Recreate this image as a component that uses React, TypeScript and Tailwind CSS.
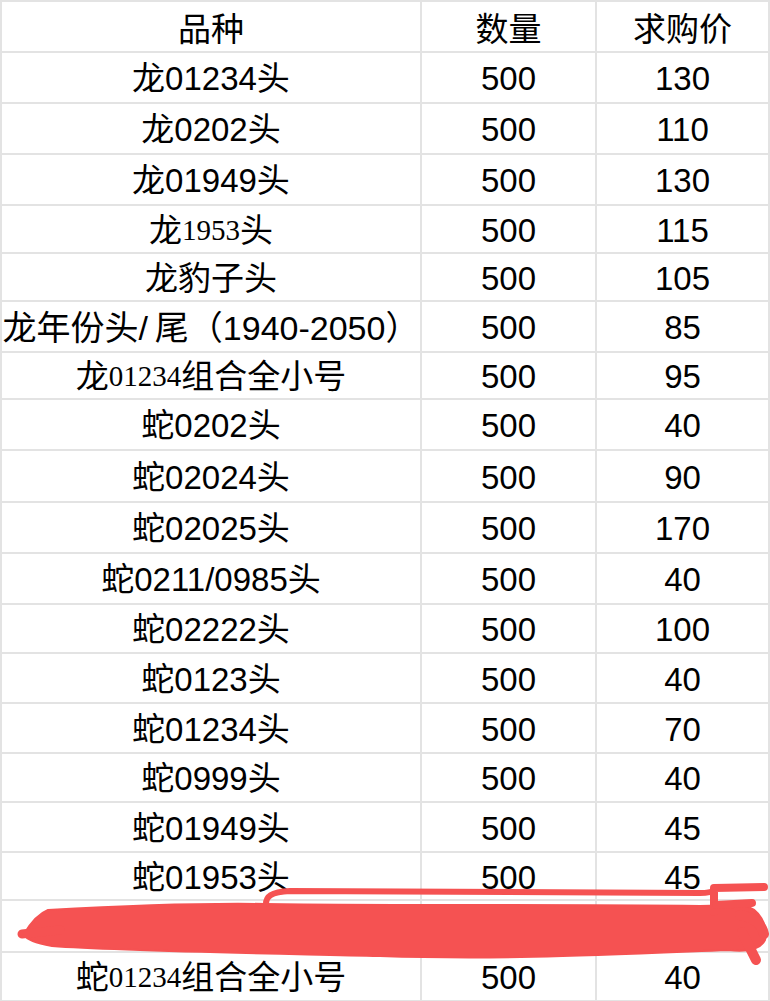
import React from 'react';

type Row = {
  name: React.ReactNode;
  qty: string;
  price: string;
  h: string;
};

const Serif: React.FC<{ children: React.ReactNode; small?: boolean }> = ({ children, small }) => (
  <span
    className={
      small
        ? "font-['Liberation_Serif',serif] text-[29px] align-[5px]"
        : "font-['Liberation_Serif',serif] text-[29px] align-[3px]"
    }
  >
    {children}
  </span>
);

const rows: Row[] = [
  { name: '龙01234头', qty: '500', price: '130', h: 'h-[51px]' },
  { name: '龙0202头', qty: '500', price: '110', h: 'h-[51px]' },
  { name: '龙01949头', qty: '500', price: '130', h: 'h-[51px]' },
  { name: <>龙<Serif>1953</Serif>头</>, qty: '500', price: '115', h: 'h-[48px]' },
  { name: '龙豹子头', qty: '500', price: '105', h: 'h-[48px]' },
  { name: <span className="text-[34px]">龙年份头/{'\u2009'}尾（1940-2050）</span>, qty: '500', price: '85', h: 'h-[51px]' },
  { name: <>龙<Serif small>01234</Serif>组合全小号</>, qty: '500', price: '95', h: 'h-[47px]' },
  { name: '蛇0202头', qty: '500', price: '40', h: 'h-[51px]' },
  { name: '蛇02024头', qty: '500', price: '90', h: 'h-[52px]' },
  { name: '蛇02025头', qty: '500', price: '170', h: 'h-[51px]' },
  { name: '蛇0211/0985头', qty: '500', price: '40', h: 'h-[51px]' },
  { name: '蛇02222头', qty: '500', price: '100', h: 'h-[49px]' },
  { name: '蛇0123头', qty: '500', price: '40', h: 'h-[50px]' },
  { name: '蛇01234头', qty: '500', price: '70', h: 'h-[50px]' },
  { name: '蛇0999头', qty: '500', price: '40', h: 'h-[49px]' },
  { name: '蛇01949头', qty: '500', price: '45', h: 'h-[50px]' },
  { name: '蛇01953头', qty: '500', price: '45', h: 'h-[48px]' },
  { name: '', qty: '', price: '', h: 'h-[52px]' },
  { name: <>蛇<Serif small>01234</Serif>组合全小号</>, qty: '500', price: '40', h: 'h-[49px]' },
];

const cell = 'flex items-center justify-center border-r-2 border-b-2 border-[#e3e3e3] whitespace-nowrap';

const TableRow: React.FC<{ row: Row }> = ({ row }) => (
  <div className={`flex ${row.h}`}>
    <div className={`${cell} w-[420px] pt-[3px]`}>{row.name}</div>
    <div className={`${cell} w-[175px] pt-[3px]`}>{row.qty}</div>
    <div className={`${cell} w-[173px] pt-[3px]`}>{row.price}</div>
  </div>
);

const Scribble: React.FC = () => (
  <svg
    className="absolute left-0 top-0 pointer-events-none"
    width="770"
    height="1001"
    viewBox="0 0 770 1001"
  >
    <g fill="#f55252" stroke="#f55252" strokeLinecap="round" strokeLinejoin="round">
      <path
        strokeWidth="2"
        d="M 24 934 C 30 924, 38 914, 48 910 C 120 906, 200 903, 265 904 C 400 906, 550 904, 700 906 L 742 905 C 760 908, 768 926, 765 940 C 760 950, 745 952, 728 950 C 600 955, 500 960, 380 956 C 250 953, 120 951, 52 946 C 36 943, 26 940, 24 934 Z"
      />
      <path fill="none" strokeWidth="6" d="M 266 904 C 266 897, 270 892, 290 891 L 700 893 C 708 893, 712 892, 714 890" />
      <path fill="none" strokeWidth="8" d="M 714 912 L 714 888 L 764 887" />
      <path fill="none" strokeWidth="10" d="M 742 932 L 756 960" />
      <path fill="none" strokeWidth="9" d="M 22 934 L 60 930" />
      <path fill="none" strokeWidth="8" d="M 716 905 L 752 903" />
      <path fill="none" strokeWidth="10" d="M 740 915 C 755 918, 762 925, 764 934" />
    </g>
  </svg>
);

export default function App() {
  return (
    <div className="relative w-[770px] h-[1001px] overflow-hidden bg-white text-black text-[33px] font-['Liberation_Sans','Noto_Sans_CJK_SC',sans-serif]">
      <div className="border-l-2 border-t-2 border-[#e3e3e3] w-[770px]">
        <div className="flex h-[51px]">
          <div className={`${cell} w-[420px] pt-[6px]`}>品种</div>
          <div className={`${cell} w-[175px] pt-[6px]`}>数量</div>
          <div className={`${cell} w-[173px] pt-[6px]`}>求购价</div>
        </div>
        {rows.map((row, i) => (
          <TableRow key={i} row={row} />
        ))}
      </div>
      <Scribble />
    </div>
  );
}
